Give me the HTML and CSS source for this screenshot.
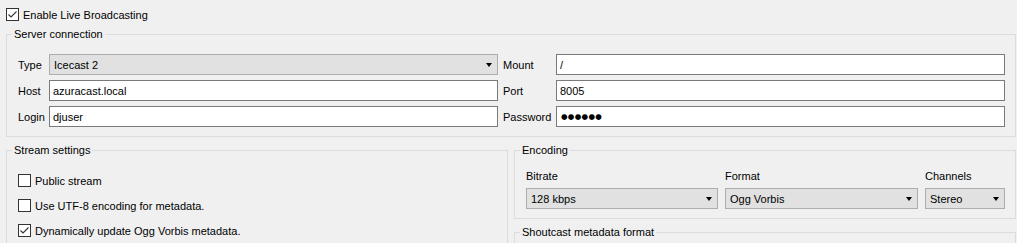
FILE: index.html
```html
<!DOCTYPE html>
<html lang="en">

<head>
    <meta charset="UTF-8">
    <title>Live Broadcasting</title>
    <link rel="stylesheet" href="styles.css">
</head>

<body>
    <div class="check-row top-check">
        <span class="check-box checked"><svg viewBox="0 0 11 11"><path d="M1.5 5.5 L4 8 L9.5 2.5"/></svg></span>
        <span>Enable Live Broadcasting</span>
    </div>

    <!--Server connection-->
    <fieldset class="group server">
        <legend>Server connection</legend>
        <div class="server-grid">
            <label class="field-label">Type</label>
            <div class="combo">Icecast 2<span class="arrow"></span></div>
            <label class="field-label right-label">Mount</label>
            <div class="text-input">/</div>

            <label class="field-label">Host</label>
            <div class="text-input">azuracast.local</div>
            <label class="field-label right-label">Port</label>
            <div class="text-input">8005</div>

            <label class="field-label">Login</label>
            <div class="text-input">djuser</div>
            <label class="field-label right-label">Password</label>
            <div class="text-input password">●●●●●●</div>
        </div>
    </fieldset>

    <div class="lower">
        <!--Stream settings-->
        <fieldset class="group stream">
            <legend>Stream settings</legend>
            <div class="check-list">
                <div class="check-row">
                    <span class="check-box"></span>
                    <span>Public stream</span>
                </div>
                <div class="check-row">
                    <span class="check-box"></span>
                    <span>Use UTF-8 encoding for metadata.</span>
                </div>
                <div class="check-row">
                    <span class="check-box checked"><svg viewBox="0 0 11 11"><path d="M1.5 5.5 L4 8 L9.5 2.5"/></svg></span>
                    <span>Dynamically update Ogg Vorbis metadata.</span>
                </div>
            </div>
        </fieldset>

        <!--Encoding-->
        <fieldset class="group encoding">
            <legend>Encoding</legend>
            <div class="enc-grid">
                <div class="enc-field">
                    <label class="enc-label">Bitrate</label>
                    <div class="combo">128 kbps<span class="arrow"></span></div>
                </div>
                <div class="enc-field">
                    <label class="enc-label">Format</label>
                    <div class="combo">Ogg Vorbis<span class="arrow"></span></div>
                </div>
                <div class="enc-field">
                    <label class="enc-label">Channels</label>
                    <div class="combo">Stereo<span class="arrow"></span></div>
                </div>
            </div>
        </fieldset>

        <!--Shoutcast-->
        <fieldset class="group shoutcast">
            <legend>Shoutcast metadata format</legend>
        </fieldset>
    </div>
</body>

</html>
```

FILE: styles.css
```css
html,
body {
    margin: 0px;
    padding: 0px;
    overflow: hidden;
}

body {
    background: #f0f0f0;
    font-family: "Liberation Sans", Arial, sans-serif;
    font-size: 11px;
    line-height: 14px;
    color: #000000;
}

.check-row {
    display: flex;
    align-items: center;
    gap: 4px;
    height: 13px;
}

.top-check {
    padding: 8px 6px 0px 6px;
}

.check-box {
    width: 11px;
    height: 11px;
    border: 1px solid #333333;
    background: #ffffff;
    flex: none;
}

.check-box svg {
    display: block;
    width: 11px;
    height: 11px;
    fill: none;
    stroke: #333333;
    stroke-width: 1.1;
}

.group {
    border: 1px solid #dcdcdc;
    margin: 0px;
    min-width: 0px;
}

.group legend {
    padding: 0px 2px;
    margin-left: -6px;
    line-height: 14px;
}

.server {
    margin: 6px 1px 0px 6px;
    padding: 13px 10px 9px 11px;
}

.server-grid {
    display: grid;
    grid-template-columns: 31px 1fr 58px 1fr;
    grid-auto-rows: 21px;
    row-gap: 5px;
}

.field-label {
    display: flex;
    align-items: center;
}

.right-label {
    padding-left: 5px;
}

.combo {
    position: relative;
    display: flex;
    align-items: center;
    height: 19px;
    padding-left: 4px;
    background: #e1e1e1;
    border: 1px solid #adadad;
}

.arrow {
    position: absolute;
    right: 5px;
    top: 8px;
    width: 0px;
    height: 0px;
    border-left: 3.5px solid transparent;
    border-right: 3.5px solid transparent;
    border-top: 4px solid #000000;
}

.text-input {
    display: flex;
    align-items: center;
    height: 19px;
    padding-left: 3px;
    background: #ffffff;
    border: 1px solid #7a7a7a;
}

.password {
    padding-left: 4px;
    font-family: "DejaVu Sans", sans-serif;
    font-size: 7.5px;
    letter-spacing: 0.3px;
}

.lower {
    display: grid;
    grid-template-columns: 1fr 1fr;
    column-gap: 6px;
    row-gap: 6px;
    margin: 6px 1px 0px 6px;
}

.stream {
    grid-row: 1 / span 2;
    padding: 17px 11px 9px 11px;
}

.check-list {
    display: flex;
    flex-direction: column;
    gap: 12px;
}

.encoding {
    padding: 12px 10px 9px 11px;
}

.enc-grid {
    display: grid;
    grid-template-columns: 192px 193px 1fr;
    column-gap: 7px;
}

.enc-field {
    display: flex;
    flex-direction: column;
    gap: 5px;
}

.enc-label {
    display: block;
}

.shoutcast {
    padding: 10px 11px;
    height: 60px;
}
```
